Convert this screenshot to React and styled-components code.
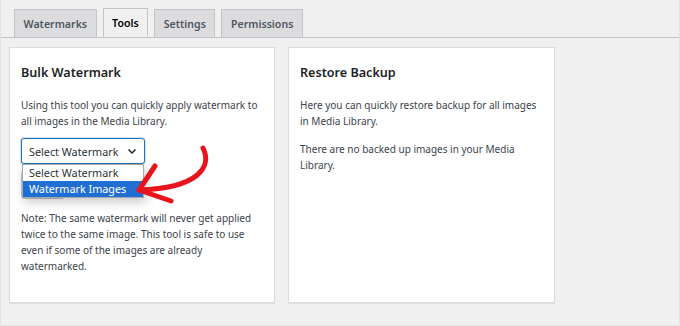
import React from 'react'
import styled, { createGlobalStyle } from 'styled-components'

const GlobalStyle = createGlobalStyle`
  html, body {
    margin: 0;
    padding: 0;
    background: #f0f0f1;
  }
  body {
    font-family: "Noto Sans", "Open Sans", sans-serif;
    color: #3c434a;
  }
`

export const Page = styled.div`
  width: 680px;
  height: 326px;
  box-sizing: border-box;
  padding-top: 9px;
  border-left: 1px solid #e4e4e6;
  border-bottom: 1px solid #e4e4e6;
  border-right: 1px solid #e4e4e6;
  overflow: hidden;
`

export const TabNav = styled.nav`
  display: flex;
  gap: 6px;
  padding-left: 13px;
  border-bottom: 1px solid #c3c4c7;
  height: 28px;
`

export const Tab = styled.a`
  display: flex;
  align-items: center;
  box-sizing: border-box;
  height: ${props => (props.active ? '29px' : '28px')};
  margin-top: ${props => (props.active ? '-1px' : '0')};
  padding: 0 8.5px;
  font-size: 10.6px;
  font-weight: 600;
  color: ${props => (props.active ? '#000' : '#50575e')};
  background: ${props => (props.active ? '#f0f0f1' : '#dcdcde')};
  border: 1px solid #c3c4c7;
  border-bottom: ${props => (props.active ? '1px solid #f0f0f1' : 'none')};
  text-decoration: none;
`

export const Cards = styled.div`
  display: flex;
  gap: 13px;
  padding: 9px 0 0 8px;
`

export const Card = styled.section`
  position: relative;
  box-sizing: border-box;
  width: ${props => props.width}px;
  height: 256px;
  background: #fff;
  border: 1px solid #dcdcde;
  box-shadow: 0 1px 1px rgba(0, 0, 0, 0.06);
  padding: 15px 11px 0;
`

export const CardTitle = styled.h2`
  margin: 0 0 14px;
  font-size: 12.6px;
  line-height: 20px;
  font-weight: 600;
  color: #1d2327;
`

export const Text = styled.p`
  margin: 0 0 ${props => props.mb || 0}px;
  font-size: 10px;
  line-height: 16px;
`

export const SelectWrap = styled.div`
  position: relative;
  width: 124px;
  margin-top: 9px;
`

export const SelectBox = styled.div`
  display: flex;
  align-items: center;
  justify-content: space-between;
  box-sizing: border-box;
  height: 26px;
  padding: 0 7px 0 7px;
  border: 1px solid #2271b1;
  border-radius: 3px;
  box-shadow: 0 0 0 1px rgba(34, 113, 177, 0.2);
  font-size: 10.8px;
  white-space: nowrap;
  color: #2c3338;
  background: #fff;
`

export const Menu = styled.ul`
  position: absolute;
  top: 26px;
  left: 1px;
  width: 122px;
  margin: 0;
  padding: 0;
  list-style: none;
  background: #fff;
  border: 1px solid #a7aaad;
  box-sizing: border-box;
  box-shadow: 2px 4px 10px rgba(0, 0, 0, 0.22);
  z-index: 2;
`

export const MenuItem = styled.li`
  height: 16px;
  line-height: 16px;
  padding-left: 6px;
  font-size: 10.8px;
  white-space: nowrap;
  color: ${props => (props.selected ? '#fff' : '#2c3338')};
  background: ${props => (props.selected ? '#1f6ed4' : '#fff')};
`

export const ApplyButton = styled.button`
  display: block;
  height: 28px;
  margin: 7px 0 11px;
  padding: 0 8px;
  font-family: inherit;
  font-size: 10px;
  color: #50575e;
  background: #f6f7f7;
  border: 1px solid #c3c4c7;
  border-radius: 3px;
`

const Chevron = () => (
  <svg width="10" height="7" viewBox="0 0 10 7">
    <path d="M1.5 1.5 L5 5 L8.5 1.5" fill="none" stroke="#1d2327" strokeWidth="1.5" />
  </svg>
)

export const ArrowLayer = styled.svg`
  position: absolute;
  left: 0;
  top: 0;
  pointer-events: none;
  z-index: 3;
`

const RedArrow = () => (
  <ArrowLayer width="265" height="256" viewBox="0 0 265 256">
    <g transform="translate(-10,-47)" fill="none" stroke="#e8141c" strokeWidth="5" strokeLinecap="round" strokeLinejoin="round">
      <path d="M203 147 C 212 165, 200 187, 139 189" />
      <path d="M155 165 L 139 189 L 171 200" />
    </g>
  </ArrowLayer>
)

const App = () => {
  return (
    <>
      <GlobalStyle />
      <Page>
        <TabNav>
          <Tab>Watermarks</Tab>
          <Tab active>Tools</Tab>
          <Tab>Settings</Tab>
          <Tab>Permissions</Tab>
        </TabNav>
        <Cards>
          <Card width={266}>
            <CardTitle>Bulk Watermark</CardTitle>
            <Text>Using this tool you can quickly apply watermark to all images in the Media Library.</Text>
            <SelectWrap>
              <SelectBox>
                Select Watermark
                <Chevron />
              </SelectBox>
              <Menu>
                <MenuItem>Select Watermark</MenuItem>
                <MenuItem selected>Watermark Images</MenuItem>
              </Menu>
            </SelectWrap>
            <ApplyButton>Apply</ApplyButton>
            <Text>Note: The same watermark will never get applied twice to the same image. This tool is safe to use even if some of the images are already watermarked.</Text>
            <RedArrow />
          </Card>
          <Card width={267}>
            <CardTitle>Restore Backup</CardTitle>
            <Text mb={12}>Here you can quickly restore backup for all images in Media Library.</Text>
            <Text>There are no backed up images in your Media Library.</Text>
          </Card>
        </Cards>
      </Page>
    </>
  )
}

export default App
